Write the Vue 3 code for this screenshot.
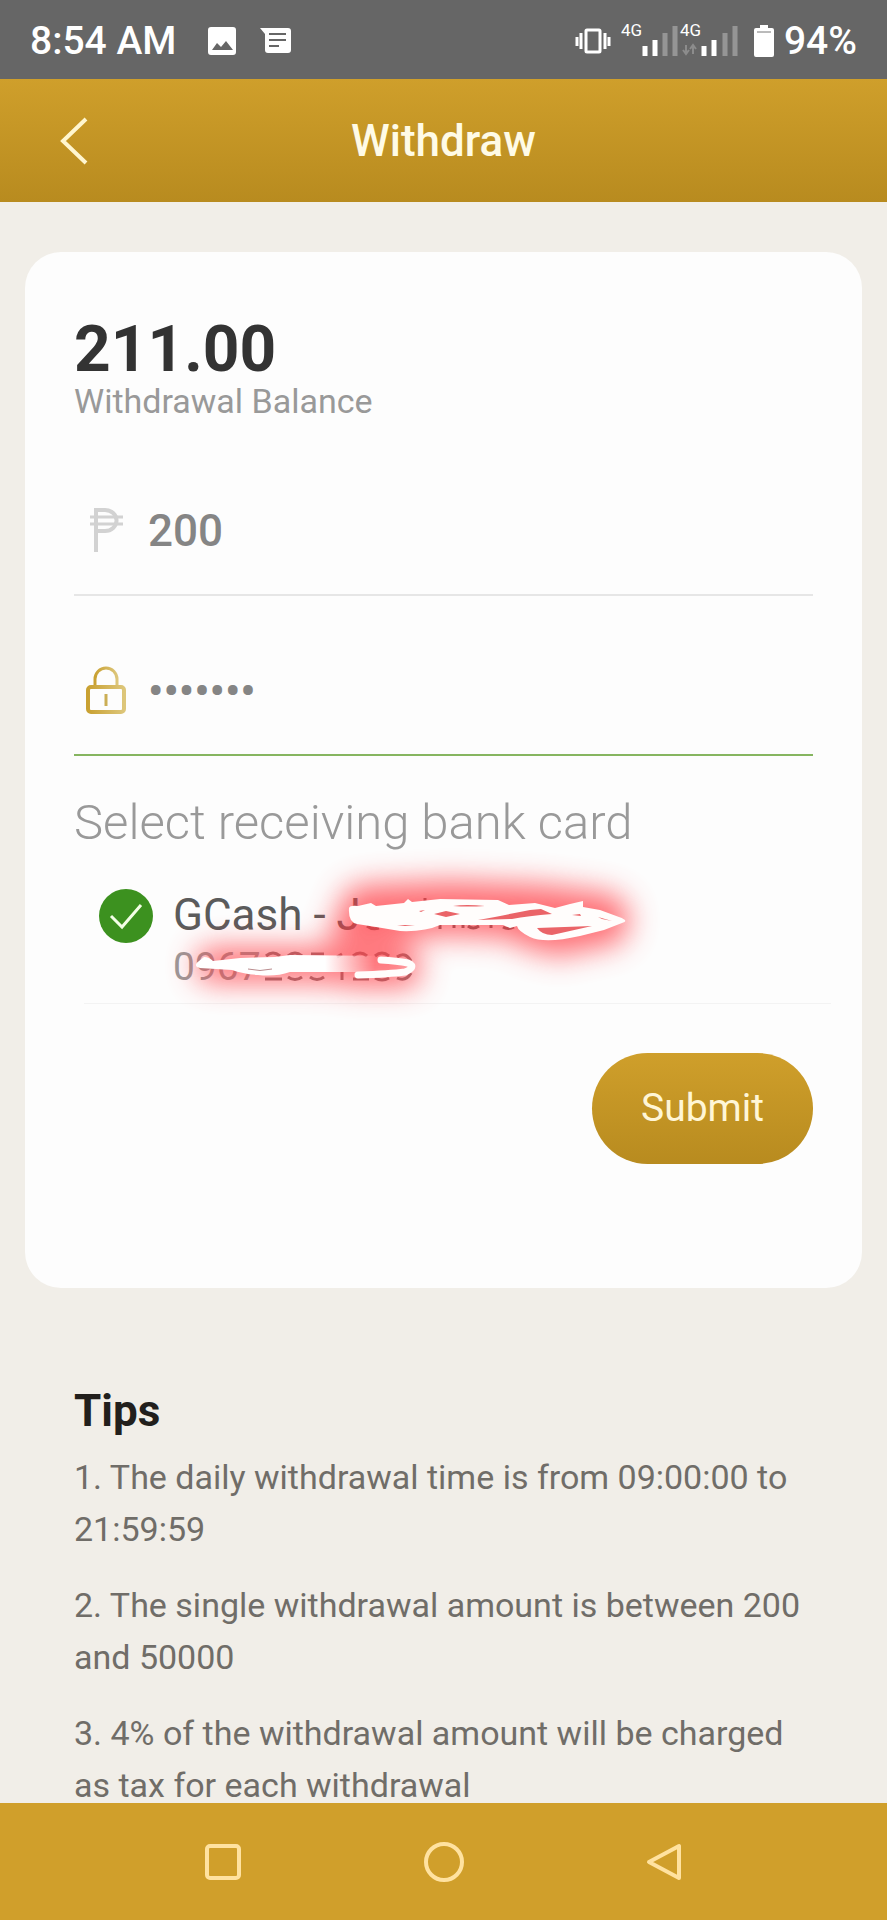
<script setup>
import { ref } from 'vue'

const amount = ref('200')
const password = ref('abcdefg')
const account = ref('gcash')

const tips = [
  '1. The daily withdrawal time is from 09:00:00 to 21:59:59',
  '2. The single withdrawal amount is between 200 and 50000',
  '3. 4% of the withdrawal amount will be charged as tax for each withdrawal',
]
</script>

<template>
  <div class="screen">
    <div class="status">
      <span class="clock">8:54 AM</span>
      <svg class="status-image" width="28" height="28" viewBox="0 0 28 28" aria-hidden="true">
        <path fill="#fff" fill-rule="evenodd" d="M3 0h22a3 3 0 0 1 3 3v22a3 3 0 0 1-3 3H3a3 3 0 0 1-3-3V3a3 3 0 0 1 3-3zM4 23h21l-7-9-5 6-4-4z" />
      </svg>
      <svg class="status-message" width="32" height="26" viewBox="0 0 32 26" aria-hidden="true">
        <path fill="#fff" d="M0 0h28a3 3 0 0 1 3 3v19a3 3 0 0 1-3 3H8a3 3 0 0 1-3-3V6z" />
        <path stroke="#666" stroke-width="2" d="M9 6h17M9 12h17M9 18h10" />
      </svg>
      <span class="spacer"></span>
      <svg width="36" height="26" viewBox="0 0 36 26" aria-hidden="true">
        <rect x="11" y="2" width="14" height="22" rx="1" fill="none" stroke="#fff" stroke-width="3" />
        <path stroke="#fff" stroke-width="3" d="M2 9v9M6 5v16M30 5v16M34 9v9" />
      </svg>
      <svg class="signals" width="118" height="46" viewBox="0 -4 118 46" aria-hidden="true">
        <g font-family="Roboto, sans-serif" font-size="17" font-weight="400" fill="#fff">
          <text x="0" y="14">4G</text>
          <text x="59" y="14">4G</text>
        </g>
        <g stroke-width="5" stroke-linecap="butt">
          <path stroke="#fff" d="M24 24v10M34 18v16M83 24v10M93 18v16" />
          <path stroke="#959595" d="M44 11v23M54 4v30M104 11v23M114 4v30" />
        </g>
        <path fill="none" stroke="#8c8c8c" stroke-width="2" d="M65 23v8M62 28l3 4 3-4M72 32v-8M69 27l3-4 3 4" />
      </svg>
      <svg width="20" height="32" viewBox="0 0 20 32" aria-hidden="true">
        <path fill="#fff" d="M6 0h8v3h4a2 2 0 0 1 2 2v25a2 2 0 0 1-2 2H2a2 2 0 0 1-2-2V5a2 2 0 0 1 2-2h4z" />
        <path stroke="#777" stroke-width="1" d="M3 7h14" />
      </svg>
      <span class="percent">94%</span>
    </div>

    <header class="header">
      <button class="back" type="button" aria-label="Back">
        <svg width="28" height="48" viewBox="0 0 28 48" aria-hidden="true">
          <path fill="none" stroke="#fff6cf" stroke-width="4" d="M26 2L3 24l23 22" />
        </svg>
      </button>
      <h1>Withdraw</h1>
    </header>

    <main class="content">
      <form class="card" @submit.prevent>
        <div class="balance">211.00</div>
        <div class="balance-label">Withdrawal Balance</div>

        <div class="field">
          <label for="amount" aria-label="Amount">
            <svg width="52" height="52" viewBox="0 0 52 52" aria-hidden="true">
              <path fill="none" stroke="#d2d2d2" stroke-width="4" d="M22 47V5h9a11 10 0 0 1 0 21h-9" />
              <path fill="none" stroke="#d2d2d2" stroke-width="3" d="M16 12h33M16 19h33" />
            </svg>
          </label>
          <input id="amount" v-model="amount" type="text" inputmode="decimal" />
        </div>

        <div class="field active">
          <label for="password" aria-label="Password">
            <svg width="52" height="52" viewBox="0 0 52 52" aria-hidden="true">
              <defs>
                <linearGradient id="lock" x1="0" x2="1">
                  <stop offset="0" stop-color="#c9a132" />
                  <stop offset="1" stop-color="#ddc67a" />
                </linearGradient>
              </defs>
              <g fill="none" stroke="url(#lock)">
                <path stroke-width="3" d="M21 21v-7a11 11 0 0 1 22 0v7" />
                <rect stroke-width="4" x="14" y="22" width="36" height="25" rx="3" />
              </g>
              <path stroke="#cbae55" stroke-width="3" d="M32 29v12" />
            </svg>
          </label>
          <input id="password" v-model="password" type="password" autocomplete="off" />
        </div>

        <h2 class="select-title">Select receiving bank card</h2>
        <div class="bank">
          <input id="gcash" v-model="account" type="radio" name="account" value="gcash" />
          <svg class="tick" width="54" height="54" viewBox="0 0 54 54" aria-hidden="true">
            <circle cx="27" cy="27" r="27" fill="#3c911f" />
            <path fill="none" stroke="#f3ffe6" stroke-width="3" d="M12 27l11 11 19-22" />
          </svg>
          <label class="bank-text" for="gcash">
            <span class="bank-name">GCash - J</span>
            <span class="bank-number">0967</span>
            <svg class="scribble" width="560" height="190" viewBox="130 840 560 190" aria-hidden="true">
              <defs>
                <filter id="glow" filterUnits="userSpaceOnUse" x="100" y="800" width="620" height="260" color-interpolation-filters="sRGB">
                  <feGaussianBlur stdDeviation="15" />
                </filter>
                <linearGradient id="fade" gradientUnits="userSpaceOnUse" x1="325" y1="0" x2="375" y2="0">
                  <stop offset="0" stop-color="#fff" />
                  <stop offset="1" stop-color="#fff" stop-opacity="0" />
                </linearGradient>
              </defs>
              <g fill="none" stroke="#8a7476" stroke-width="3">
                <path stroke="#6b5c5d" d="M367 926q5 4 12 2M425 901v-3M440 925v4M454 924v4M463 924v4M468 926q5 4 11 0M491 924v4M503 927q5 3 11 0" />
                <path d="M266 956q7-6 14 0M288 956q7-6 14 0M311 954h13M337 957l5-3M353 956q7-6 14 0M375 956q7-6 14 0M397 957q8-6 14 4M265 979h17M288 977q7 5 14 0M310 977q7 5 14 0M342 972v8M353 979h16M375 978q7 4 14 0M397 978q9 4 14-5" />
              </g>
              <g fill="none" stroke="#ff3c44" stroke-linecap="round" opacity="0.75" filter="url(#glow)">
                <path stroke-width="54" d="M366 912L450 908 540 912 602 920" />
                <path stroke-width="24" d="M525 935L560 944 610 930M400 934H340" />
                <path stroke-width="34" d="M212 965L300 965 404 967" />
                <path stroke-width="22" d="M350 976H408" />
              </g>
              <path fill="#fffdfc" d="M349 908Q350 905 358 906L371 903 376 906 404 903 408 899 412 902 440 899 498 900 509 905 535 903 555 908 570 904 583 901 583 907 600 910 619 917Q630 921 622 923L604 930 580 936Q545 944 530 937 518 931 517 926L510 928 503 925 440 925Q425 932 400 931L376 927 357 924Q348 922 349 908z" />
              <g fill="#ea6468">
                <path d="M434 914L446 911 460 914 446 917zM478 920Q510 914 530 910L541 909 552 914Q528 916 512 919zM537 928L592 926Q570 931 552 935 542 935 537 928z" />
                <path d="M453 906Q466 904 485 906 468 907 453 906zM572 915l8-1 1 2zM598 917l14 4-10-2zM397 926l18 0-10-1zM419 911l6-1-4 2z" />
              </g>
              <path fill="url(#fade)" d="M197 967Q194 964 199 961L204 957Q209 957 213 961L240 958 275 957 290 955 385 956V972L290 972Q276 977 258 975 243 974 232 970L200 968z" />
              <path fill="none" stroke="#b98c8e" stroke-width="1" d="M248 969q12 3 24 0" />
              <path fill="none" stroke="#fffdfc" stroke-width="7" stroke-linecap="round" stroke-linejoin="round" d="M381 960Q397 961 408 963 417 967 405 972 390 974 358 975" />
            </svg>
          </label>
        </div>

        <button class="submit" type="submit">Submit</button>
      </form>

      <section class="tips">
        <h2>Tips</h2>
        <p v-for="tip in tips" :key="tip">{{ tip }}</p>
      </section>
    </main>

    <nav class="nav" aria-label="System navigation">
      <button type="button" aria-label="Recent apps">
        <svg width="40" height="40" viewBox="0 0 40 40" aria-hidden="true">
          <rect x="4" y="4" width="32" height="32" rx="3" />
        </svg>
      </button>
      <button type="button" aria-label="Home">
        <svg width="40" height="40" viewBox="0 0 40 40" aria-hidden="true">
          <circle cx="20" cy="20" r="18" />
        </svg>
      </button>
      <button type="button" aria-label="Back">
        <svg width="40" height="40" viewBox="0 0 40 40" aria-hidden="true">
          <path stroke-linejoin="round" d="M34 4v32L4 20z" />
        </svg>
      </button>
    </nav>
  </div>
</template>

<style>
body {
  margin: 0;
  background: #f1eee8;
}
</style>

<style scoped>
.screen {
  display: flex;
  flex-direction: column;
  height: 100vh;
  font-family: Roboto, "Noto Sans", sans-serif;
  color: #333;
  background: #f1eee8;
}
* {
  box-sizing: border-box;
}
h1,
h2,
p {
  margin: 0;
}
button {
  padding: 0;
  border: 0;
  background: none;
  font-family: inherit;
}
svg {
  display: block;
  flex: none;
}
.status {
  display: flex;
  flex: none;
  align-items: center;
  height: 79px;
  padding: 2px 30px 0;
  background: #666;
  color: #fff;
  font-size: 39px;
  font-weight: 500;
}
.status-image {
  margin-left: 32px;
}
.status-message {
  margin-left: 24px;
}
.spacer {
  flex: 1;
}
.signals {
  margin: 0 15px 0 10px;
}
.percent {
  margin-left: 10px;
}
.header {
  position: relative;
  display: flex;
  flex: none;
  align-items: center;
  justify-content: center;
  height: 123px;
  background: linear-gradient(#cf9f2b, #b88b1f);
}
.header h1 {
  color: #fffbe6;
  font-size: 44px;
  font-weight: 500;
}
.back {
  position: absolute;
  left: 60px;
}
.content {
  flex: 1;
  min-height: 0;
  padding: 50px 25px 0;
  overflow: hidden auto;
  scrollbar-width: none;
}
.card {
  display: flex;
  flex-direction: column;
  padding: 66px 49px 124px;
  border-radius: 36px;
  background: #fdfdfd;
}
.balance {
  font-size: 64px;
  font-weight: 700;
  line-height: 64px;
}
.balance-label {
  margin-bottom: 16px;
  color: #999;
  font-size: 34px;
  line-height: 38px;
}
.field {
  display: flex;
  align-items: center;
  height: 160px;
  padding-top: 32px;
  border-bottom: 2px solid #e6e6e6;
}
.field.active {
  border-color: #86b560;
}
.field input {
  flex: 1;
  min-width: 0;
  height: 100%;
  margin-left: 22px;
  padding: 0;
  border: 0;
  outline: 0;
  background: none;
  color: #858585;
  font-family: inherit;
  font-size: 44px;
  font-weight: 500;
}
.select-title {
  margin-top: 39px;
  color: #999;
  font-size: 49px;
  font-weight: 300;
  line-height: 56px;
}
.bank {
  position: relative;
  display: flex;
  margin: 38px -18px 0 10px;
  padding: 0 0 10px 15px;
  border-bottom: 1px solid #f3f3f3;
}
.bank input {
  position: absolute;
  width: 54px;
  height: 54px;
  margin: 0;
  opacity: 0;
}
.tick {
  margin-right: 20px;
}
.bank-text {
  position: relative;
  display: flex;
  flex: 1;
  flex-direction: column;
  line-height: 52px;
}
.bank-name {
  color: #5b5b5b;
  font-size: 44px;
}
.bank-number {
  color: #999;
  font-size: 39px;
}
.scribble {
  position: absolute;
  top: -49px;
  left: -43px;
  pointer-events: none;
}
.submit {
  align-self: flex-end;
  margin-top: 49px;
  padding: 0 49px;
  border-radius: 56px;
  background: linear-gradient(#cf9f2b, #b88b1f);
  color: #fff6d6;
  font-size: 39px;
  line-height: 111px;
}
.tips {
  padding: 97px 49px 0;
}
.tips h2 {
  margin-bottom: 14px;
  color: #221f1c;
  font-size: 44px;
  font-weight: 700;
  line-height: 52px;
}
.tips p {
  margin-bottom: 24px;
  color: #706d68;
  font-size: 34px;
  line-height: 52px;
}
.nav {
  display: flex;
  flex: none;
  align-items: center;
  justify-content: center;
  gap: 181px;
  height: 117px;
  background: #d09f2b;
}
.nav svg {
  fill: none;
  stroke: #ffe2a0;
  stroke-width: 4px;
}
</style>
